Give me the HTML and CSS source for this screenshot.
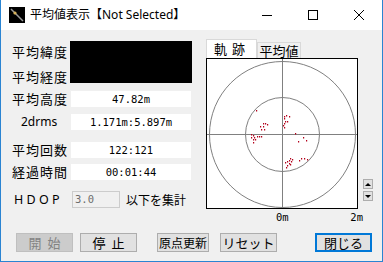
FILE: index.html
```html
<!DOCTYPE html>
<html lang="ja">
<head>
    <meta charset="UTF-8">
    <meta name="viewport" content="width=device-width, initial-scale=1.0">
    <title>平均値表示</title>
    <link rel="stylesheet" href="styles.css">
</head>
<body>
    <div class="window">
        <div class="titlebar">
            <svg class="app-icon" viewBox="0 0 16 16">
                <rect width="16" height="16" fill="#000"/>
                <line x1="2" y1="2" x2="14" y2="14" stroke="#9a9a9a" stroke-width="1.5"/>
                <circle cx="6" cy="6" r="1.6" fill="#d8b25a"/>
            </svg>
            <span class="title">平均値表示【Not Selected】</span>
            <div class="win-controls">
                <span class="ctl">
                    <svg viewBox="0 0 10 10"><line x1="0" y1="5.5" x2="10" y2="5.5" stroke="#000"/></svg>
                </span>
                <span class="ctl">
                    <svg viewBox="0 0 10 10"><rect x="0.5" y="0.5" width="9" height="9" fill="none" stroke="#000"/></svg>
                </span>
                <span class="ctl">
                    <svg viewBox="0 0 10 10"><path d="M0 0L10 10M10 0L0 10" stroke="#000"/></svg>
                </span>
            </div>
        </div>

        <div class="client">
            <div class="top">
                <div class="left">
                    <div class="row row-latlon">
                        <div class="labels2">
                            <span class="label">平均緯度</span>
                            <span class="label">平均経度</span>
                        </div>
                        <div class="blackbox"></div>
                    </div>
                    <div class="row r-alt">
                        <span class="label">平均高度</span>
                        <div class="value">47.82m</div>
                    </div>
                    <div class="row r-drms">
                        <span class="label label-drms">2drms</span>
                        <div class="value">1.171m:5.897m</div>
                    </div>
                    <div class="row r-count">
                        <span class="label">平均回数</span>
                        <div class="value">122:121</div>
                    </div>
                    <div class="row r-time">
                        <span class="label">経過時間</span>
                        <div class="value">00:01:44</div>
                    </div>
                    <div class="row r-hdop">
                        <span class="label label-hdop">H D O P</span>
                        <div class="hdop-input">3.0</div>
                        <span class="hdop-text">以下を集計</span>
                    </div>
                </div>

                <div class="right">
                    <div class="tabs">
                        <div class="tab active">軌跡</div>
                        <div class="tab">平均値</div>
                    </div>
                    <div class="plot-row">
                        <svg class="plot" viewBox="0 0 152 151">
                            <defs>
                                <clipPath id="inner"><rect x="1" y="1" width="150" height="149"/></clipPath>
                            </defs>
                            <rect x="0.5" y="0.5" width="151" height="150" fill="#fff" stroke="#000"/>
                            <g clip-path="url(#inner)" stroke="#808080" fill="none">
                                <line x1="76.5" y1="1" x2="76.5" y2="150"/>
                                <line x1="1" y1="76.5" x2="151" y2="76.5"/>
                                <circle cx="76.5" cy="76.5" r="73"/>
                                <circle cx="76.5" cy="76.5" r="37"/>
                            </g>
                            <g id="dots" fill="#b3001b"></g>
                        </svg>
                        <div class="spin">
                            <div class="spin-btn"><span class="tri-up"></span></div>
                            <div class="spin-btn"><span class="tri-down"></span></div>
                        </div>
                    </div>
                    <div class="scale">
                        <span class="zero">0m</span>
                        <span class="two">2m</span>
                    </div>
                </div>
            </div>

            <div class="buttons">
                <button class="btn btn-start spaced" disabled>開始</button>
                <button class="btn btn-stop spaced">停止</button>
                <button class="btn btn-origin">原点更新</button>
                <button class="btn btn-reset">リセット</button>
                <button class="btn btn-close">閉じる</button>
            </div>
        </div>
    </div>

    <script>
        // 軌跡の点
        const points = [
            [50,52],[57,65],[59,65],[61,66],[54,68],[57,68],[55,71],[58,71],
            [45,76],[47,77],[45,79],[48,79],[51,78],[53,78],[55,78],[47,81],[49,81],[47,84],
            [78,58],[80,57],[83,58],[78,60],[79,63],[81,63],[78,65],[77,67],[78,69],
            [89,75],[97,79],[100,82],[92,83],
            [84,100],[86,101],[83,102],[81,103],[85,103],[79,104],[83,105],[81,107],[84,106],[80,109],
            [95,100],[98,100],[93,102],[101,101]
        ];
        const dots = document.getElementById('dots');
        points.forEach(p => {
            const r = document.createElementNS('http://www.w3.org/2000/svg', 'rect');
            r.setAttribute('x', p[0]);
            r.setAttribute('y', p[1]);
            r.setAttribute('width', 1.2);
            r.setAttribute('height', 1.5);
            dots.appendChild(r);
        });
    </script>
</body>
</html>
```

FILE: styles.css
```css
* {
    margin: 0;
    padding: 0;
    box-sizing: border-box;
}

body {
    font-family: "Noto Sans", "Noto Sans CJK JP", sans-serif;
    background: #fff;
}

.window {
    width: 383px;
    height: 262px;
    border: 1px solid #2a84d2;
    border-top: none;
    display: flex;
    flex-direction: column;
}

.titlebar {
    height: 30px;
    background: #fff;
    display: flex;
    align-items: center;
}

.app-icon {
    width: 16px;
    height: 16px;
    margin-left: 8px;
}

.title {
    margin-left: 5px;
    font-size: 12px;
    color: #000;
    line-height: 16px;
}

.win-controls {
    margin-left: auto;
    display: flex;
    height: 30px;
}

.ctl {
    width: 46px;
    display: flex;
    align-items: center;
    justify-content: center;
}

.ctl svg {
    width: 10px;
    height: 10px;
}

.client {
    flex: 1;
    background: #f0f0f0;
    padding-left: 11px;
    display: flex;
    flex-direction: column;
}

.top {
    display: flex;
    padding-top: 9px;
}

/* left column */
.left {
    width: 181px;
    margin-top: 2px;
    display: flex;
    flex-direction: column;
}

.row {
    display: flex;
    align-items: center;
    height: 16px;
}

.label {
    font-family: "Noto Sans CJK JP", sans-serif;
    font-size: 13px;
    letter-spacing: 1px;
    line-height: 16px;
    color: #000;
    width: 59px;
    white-space: nowrap;
}

.row-latlon {
    height: 42px;
    align-items: flex-start;
}

.labels2 {
    width: 58px;
    display: flex;
    flex-direction: column;
    gap: 9px;
    padding-top: 3px;
}

.blackbox {
    width: 122px;
    height: 42px;
    background: #000;
}

.value {
    width: 120px;
    height: 16px;
    background: #fff;
    font-family: "DejaVu Sans Mono", monospace;
    font-size: 10.5px;
    line-height: 16px;
    text-align: center;
    color: #000;
}

.r-alt { margin-top: 8px; }
.r-drms { margin-top: 7px; }
.r-count { margin-top: 12px; }
.r-time { margin-top: 6px; }

.label-drms {
    font-family: "Noto Sans", sans-serif;
    font-size: 12px;
    letter-spacing: 0;
    padding-left: 9px;
}

.r-hdop {
    margin-top: 11px;
    height: 17px;
}

.label-hdop {
    font-family: "Noto Sans", sans-serif;
    font-size: 12.5px;
    letter-spacing: 0;
    padding-left: 2px;
    width: 60px;
}

.hdop-input {
    width: 48px;
    height: 17px;
    border: 1px solid #cccccc;
    background: #f0f0f0;
    color: #6d6d6d;
    font-family: "DejaVu Sans Mono", monospace;
    font-size: 10.5px;
    line-height: 15px;
    padding-left: 2px;
}

.hdop-text {
    margin-left: 6px;
    font-family: "Noto Sans CJK JP", sans-serif;
    font-size: 12px;
    line-height: 16px;
    white-space: nowrap;
}

/* right column */
.right {
    margin-left: 13px;
    display: flex;
    flex-direction: column;
}

.tabs {
    display: flex;
    align-items: flex-end;
    height: 19px;
}

.tab {
    font-family: "Noto Sans CJK JP", sans-serif;
    font-size: 13px;
    line-height: 15px;
    height: 16px;
    width: 44px;
    background: #f0f0f0;
    border: 1px solid #d9d9d9;
    border-bottom: none;
    text-align: center;
    color: #000;
}

.tab.active {
    width: 51px;
    height: 19px;
    line-height: 18px;
    background: #fff;
    text-align: left;
    padding-left: 7px;
    letter-spacing: 5px;
}

.plot-row {
    display: flex;
    align-items: flex-end;
}

.plot {
    width: 152px;
    height: 151px;
    display: block;
}

.spin {
    margin-left: 5px;
    margin-bottom: 8px;
    display: flex;
    flex-direction: column;
    gap: 2px;
}

.spin-btn {
    width: 10px;
    height: 10px;
    background: #e1e1e1;
    border: 1px solid #adadad;
    display: flex;
    align-items: center;
    justify-content: center;
}

.tri-up {
    width: 0;
    height: 0;
    border-left: 3px solid transparent;
    border-right: 3px solid transparent;
    border-bottom: 3px solid #000;
}

.tri-down {
    width: 0;
    height: 0;
    border-left: 3px solid transparent;
    border-right: 3px solid transparent;
    border-top: 3px solid #000;
}

.scale {
    display: flex;
    width: 157px;
    height: 17px;
    font-family: "DejaVu Sans Mono", monospace;
    font-size: 10.5px;
    line-height: 17px;
    color: #000;
}

.zero {
    margin-left: 70px;
}

.two {
    margin-left: auto;
}

/* bottom buttons */
.buttons {
    margin-top: auto;
    padding-bottom: 9px;
    padding-left: 4px;
    display: flex;
}

.btn {
    height: 19px;
    width: 57px;
    background: #e1e1e1;
    border: 1px solid #adadad;
    font-family: "Noto Sans CJK JP", sans-serif;
    font-size: 13px;
    line-height: 16px;
    color: #000;
    white-space: nowrap;
}

.btn.spaced {
    letter-spacing: 6px;
    text-indent: 6px;
}

.btn:disabled {
    background: #cccccc;
    border-color: #bfbfbf;
    color: #838383;
}

.btn-stop { margin-left: 7px; }

.btn-origin {
    margin-left: 20px;
    width: 52px;
    font-size: 12px;
}

.btn-reset { margin-left: 11px; }

.btn-close {
    margin-left: 38px;
    border: 2px solid #0078d7;
}
```
